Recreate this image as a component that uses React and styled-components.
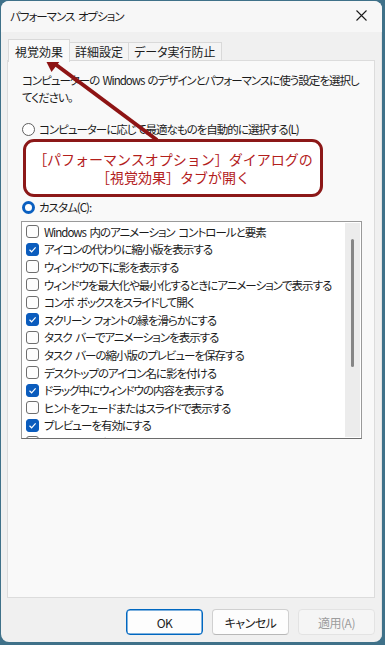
import React from "react";
import styled, { createGlobalStyle } from "styled-components";

const Global = createGlobalStyle`
  html, body { margin: 0; padding: 0; }
  body {
    background: #3f7189;
    font-family: "Noto Sans CJK JP", "Noto Sans", sans-serif;
    font-feature-settings: "palt" 1;
    color: #1b1b1b;
  }
  #root { width: 385px; height: 645px; }
`;

const Stage = styled.div`
  position: relative;
  width: 385px;
  height: 645px;
  padding: 1px 3px 3px 1px;
  box-sizing: border-box;
`;

const Window = styled.div`
  width: 381px;
  height: 641px;
  border-radius: 8px;
  overflow: hidden;
  background: #f0f0f0;
  display: flex;
  flex-direction: column;
  box-shadow: inset -6px 0 0 -5px #e2e2e2;
`;

const TitleBar = styled.div`
  height: 31px;
  flex: none;
  background: #f7f7f7;
  display: flex;
  align-items: center;
  justify-content: space-between;
  padding: 0 10px 2px 9px;
  box-sizing: border-box;
  font-size: 11.5px;
  letter-spacing: -1px;
  word-spacing: 2px;
`;

const CloseBtn = styled.div`
  width: 16px;
  height: 16px;
  display: flex;
  align-items: center;
  justify-content: center;
  margin-right: 3px;
`;

const Body = styled.div`
  flex: 1;
  display: flex;
  flex-direction: column;
  padding: 6px 7px 7px 6px;
  min-height: 0;
`;

const Tabs = styled.div`
  display: flex;
  align-items: flex-end;
  padding-left: 1px;
  height: 23px;
  position: relative;
  z-index: 1;
`;

const Tab = styled.div`
  font-size: 12px;
  display: flex;
  align-items: center;
  padding: 0 ${(p) => (p.$active ? 6 : 5)}px;
  height: ${(p) => (p.$active ? 23 : 19)}px;
  box-sizing: border-box;
  border: 1px solid #d9d9d9;
  border-bottom: ${(p) => (p.$active ? "none" : "1px solid #d9d9d9")};
  border-left: ${(p) => (p.$first || p.$active ? "1px solid #d9d9d9" : "none")};
  background: ${(p) => (p.$active ? "#f9f9f9" : "#f4f4f4")};
  margin-bottom: ${(p) => (p.$active ? "-1px" : "0")};
  line-height: 1;
  padding-top: ${(p) => (p.$active ? 1 : 0)}px;
`;

const Panel = styled.div`
  position: relative;
  margin-top: -1px;
  flex: 1;
  background: #f9f9f9;
  border: 1px solid #dcdcdc;
  padding: 11px 12px 0 13px;
  display: flex;
  flex-direction: column;
`;

const Desc = styled.p`
  margin: 0 0 10px 1px;
  font-size: 11.5px;
  letter-spacing: -1px;
  word-spacing: 1.5px;
  line-height: 17px;
  white-space: nowrap;
`;

const RadioRow = styled.div`
  height: 26px;
  display: flex;
  align-items: center;
  gap: 4px;
  font-size: 11.5px;
  letter-spacing: -1px;
  padding-left: 1px;
  visibility: ${(p) => (p.$covered ? "hidden" : "visible")};
`;

const RadioDot = styled.span`
  width: 13px;
  height: 13px;
  box-sizing: border-box;
  border-radius: 50%;
  flex: none;
  background: #fff;
  border: ${(p) => (p.$on ? "3.5px solid #0a5fc0" : "1px solid #5f5f5f")};
`;

const ListBox = styled.div`
  width: 341px;
  height: 218px;
  box-sizing: border-box;
  background: #fff;
  border: 1px solid #9a9a9a;
  border-bottom-color: #6c6c6c;
  display: flex;
  overflow: hidden;
  margin-top: 1px;
`;

const Items = styled.div`
  flex: 1;
  padding-top: 1px;
  overflow: hidden;
`;

const Item = styled.div`
  height: 17.6px;
  display: flex;
  align-items: center;
  gap: 5px;
  padding-left: 4px;
  font-size: 11.5px;
  letter-spacing: -1px;
  word-spacing: 2px;
  white-space: nowrap;
`;

const Check = styled.span`
  width: 13px;
  height: 13px;
  box-sizing: border-box;
  border-radius: 3px;
  flex: none;
  display: flex;
  align-items: center;
  justify-content: center;
  background: ${(p) => (p.$on ? "#0b5cbd" : "#fdfdfd")};
  border: 1px solid ${(p) => (p.$on ? "#0b5cbd" : "#6e6e6e")};
`;

const ScrollTrack = styled.div`
  width: 15px;
  flex: none;
  margin: 1px 1px 1px 0;
  background: #ececec;
  display: flex;
  justify-content: center;
  padding-top: 16px;
  box-sizing: border-box;
`;

const Thumb = styled.div`
  width: 3px;
  height: 128px;
  border-radius: 2px;
  background: #868686;
`;

const Callout = styled.div`
  position: absolute;
  left: 15px;
  top: 78px;
  width: 300px;
  height: 58px;
  box-sizing: border-box;
  border: 3px solid #8c1818;
  border-radius: 11px;
  background: #fff;
  color: #b3201c;
  font-size: 14px;
  line-height: 18px;
  display: flex;
  flex-direction: column;
  align-items: center;
  justify-content: center;
  font-feature-settings: normal;
`;

const Footer = styled.div`
  flex: none;
  display: flex;
  justify-content: flex-end;
  gap: 9px;
  margin-top: 11px;
`;

const Button = styled.div`
  width: 77px;
  height: 26px;
  box-sizing: border-box;
  border-radius: 4px;
  display: flex;
  align-items: center;
  justify-content: center;
  font-size: 12px;
  letter-spacing: -0.5px;
  background: ${(p) => (p.$disabled ? "#f5f5f5" : "#fdfdfd")};
  color: ${(p) => (p.$disabled ? "#9d9d9d" : "#1b1b1b")};
  border: 1px solid
    ${(p) => (p.$primary ? "#0067c0" : p.$disabled ? "#e3e3e3" : "#d0d0d0")};
  border-bottom-color: ${(p) =>
    p.$primary ? "#0067c0" : p.$disabled ? "#e3e3e3" : "#b8b8b8"};
  box-shadow: ${(p) => (p.$primary ? "inset 0 0 0 0.5px #0067c0" : "none")};
`;

const Overlay = styled.svg`
  position: absolute;
  left: 0;
  top: 0;
  pointer-events: none;
`;

const items = [
  ["Windows 内のアニメーション コントロールと要素", false],
  ["アイコンの代わりに縮小版を表示する", true],
  ["ウィンドウの下に影を表示する", false],
  ["ウィンドウを最大化や最小化するときにアニメーションで表示する", false],
  ["コンボ ボックスをスライドして開く", false],
  ["スクリーン フォントの縁を滑らかにする", true],
  ["タスク バーでアニメーションを表示する", false],
  ["タスク バーの縮小版のプレビューを保存する", false],
  ["デスクトップのアイコン名に影を付ける", false],
  ["ドラッグ中にウィンドウの内容を表示する", true],
  ["ヒントをフェードまたはスライドで表示する", false],
  ["プレビューを有効にする", true],
  ["半透明の [選択] ツールを表示する", false],
];

const radios = [
  ["コンピューターに応じて最適なものを自動的に選択する(L)", false, false],
  ["デザインを優先する(P)", false, true],
  ["パフォーマンスを優先する(B)", false, true],
  ["カスタム(C):", true, false],
];

export default function App() {
  return (
    <>
      <Global />
      <Stage>
        <Window>
          <TitleBar>
            <span>パフォーマンス オプション</span>
            <CloseBtn>
              <svg width="11" height="11" viewBox="0 0 11 11">
                <path d="M0.5 0.5 L10.5 10.5 M10.5 0.5 L0.5 10.5" stroke="#1b1b1b" strokeWidth="1.1" />
              </svg>
            </CloseBtn>
          </TitleBar>
          <Body>
            <Tabs>
              <Tab $active $first>視覚効果</Tab>
              <Tab>詳細設定</Tab>
              <Tab>データ実行防止</Tab>
            </Tabs>
            <Panel>
              <Desc>
                コンピューターの Windows のデザインとパフォーマンスに使う設定を選択し
                <br />
                てください。
              </Desc>
              {radios.map(([label, on, covered]) => (
                <RadioRow key={label} $covered={covered}>
                  <RadioDot $on={on} />
                  <span>{label}</span>
                </RadioRow>
              ))}
              <ListBox>
                <Items>
                  {items.map(([label, on]) => (
                    <Item key={label}>
                      <Check $on={on}>
                        {on && (
                          <svg width="9" height="9" viewBox="0 0 9 9">
                            <path d="M1.5 4.8 L3.6 6.8 L7.6 2.4" fill="none" stroke="#fff" strokeWidth="1.2" />
                          </svg>
                        )}
                      </Check>
                      <span>{label}</span>
                    </Item>
                  ))}
                </Items>
                <ScrollTrack>
                  <Thumb />
                </ScrollTrack>
              </ListBox>
              <Callout>
                <span>［パフォーマンスオプション］ダイアログの</span>
                <span>［視覚効果］タブが開く</span>
              </Callout>
            </Panel>
            <Footer>
              <Button $primary>OK</Button>
              <Button>キャンセル</Button>
              <Button $disabled>適用(A)</Button>
            </Footer>
          </Body>
        </Window>
        <Overlay width="385" height="645" viewBox="0 0 385 645">
          <line x1="55" y1="64" x2="157" y2="140" stroke="#8e1414" strokeWidth="4" />
          <polygon points="43,55 51.5,72 62,58.5" fill="#8e1414" />
        </Overlay>
      </Stage>
    </>
  );
}
